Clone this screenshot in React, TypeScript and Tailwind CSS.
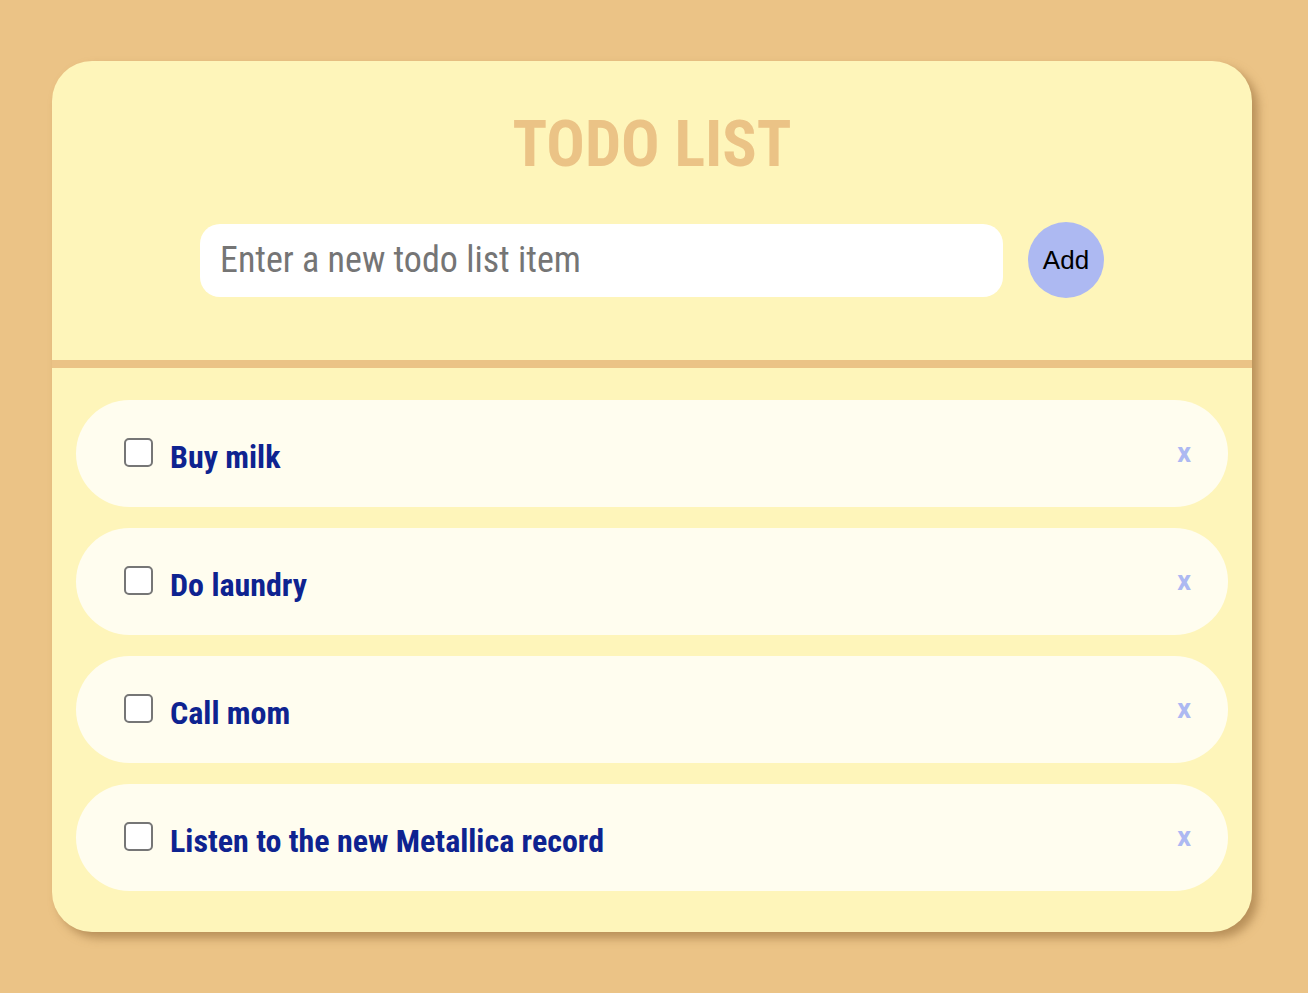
import React, { useState } from "react";

type Todo = { id: number; text: string; done: boolean };

const initialTodos: Todo[] = [
  { id: 1, text: "Buy milk", done: false },
  { id: 2, text: "Do laundry", done: false },
  { id: 3, text: "Call mom", done: false },
  { id: 4, text: "Listen to the new Metallica record", done: false },
];

const condensed = "font-['Roboto_Condensed','Liberation_Sans_Narrow',Roboto,sans-serif]";

export default function App() {
  const [todos, setTodos] = useState<Todo[]>(initialTodos);
  const [draft, setDraft] = useState("");

  const addTodo = () => {
    if (!draft.trim()) return;
    setTodos((prev) => [...prev, { id: Date.now(), text: draft.trim(), done: false }]);
    setDraft("");
  };

  return (
    <div className="min-h-screen bg-[#ebc386] px-[52px] pt-[61px] pb-[61px]">
      <div className="w-[1200px] bg-[#fef5ba] rounded-[40px] shadow-[6px_6px_10px_rgba(150,110,60,0.6)] overflow-hidden">
        {/* Header */}
        <div className="h-[299px] flex flex-col items-center pt-[44px]">
          <h1 className={`${condensed} text-[64px] leading-[80px] font-bold text-[#ebc386]`}>TODO LIST</h1>
          <div className="flex items-center gap-[25px] mt-[37px]">
            <input
              value={draft}
              onChange={(e) => setDraft(e.target.value)}
              placeholder="Enter a new todo list item"
              className={`${condensed} w-[803px] h-[73px] rounded-[20px] bg-white px-5 text-[36px] text-black placeholder:text-[#757575] outline-none`}
            />
            <button
              onClick={addTodo}
              className="w-[76px] h-[76px] rounded-full bg-[#adb9f2] text-black text-[26px] font-['Liberation_Sans',Arial,sans-serif]"
            >
              Add
            </button>
          </div>
        </div>

        <div className="h-[8px] bg-[#ebc386]" />

        {/* List */}
        <ul className="flex flex-col gap-[21px] px-[24px] pt-[32px] pb-[41px]">
          {todos.map((todo) => (
            <li
              key={todo.id}
              className="h-[107px] rounded-full bg-[#fffdef] flex items-center pl-[48px] pr-[37px]"
            >
              <input
                type="checkbox"
                checked={todo.done}
                onChange={() =>
                  setTodos((prev) => prev.map((t) => (t.id === todo.id ? { ...t, done: !t.done } : t)))
                }
                className="appearance-none w-[29px] h-[29px] rounded-[5px] border-2 border-[#767676] bg-white -mt-[2px]"
              />
              <span className={`${condensed} ml-[17px] mt-[6px] text-[32px] font-bold text-[#0e2390] flex-1`}>
                {todo.text}
              </span>
              <button
                onClick={() => setTodos((prev) => prev.filter((t) => t.id !== todo.id))}
                className="font-['Roboto',sans-serif] text-[27px] font-bold text-[#adb9f2] leading-none"
              >
                x
              </button>
            </li>
          ))}
        </ul>
      </div>
    </div>
  );
}
